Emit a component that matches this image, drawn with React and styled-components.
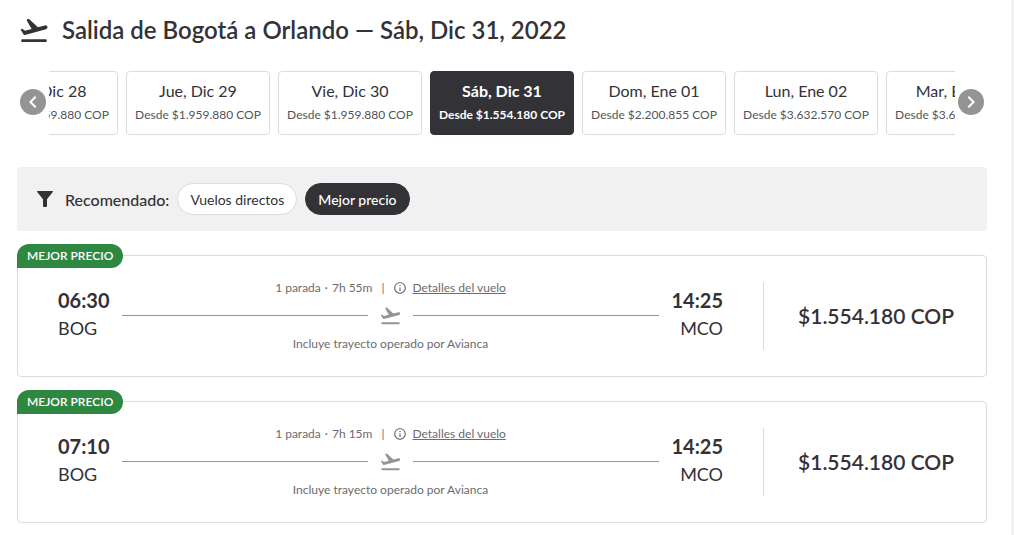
import React from "react";
import styled, { createGlobalStyle, css } from "styled-components";
import {
  MdChevronLeft,
  MdChevronRight,
  MdInfoOutline,
} from "react-icons/md";

const ink = "#333237";
const soft = "#55545a";
const muted = "#6c6b70";
const line = "#dcdcdc";
const panel = "#f1f1f1";

const GlobalStyle = createGlobalStyle`
  *, *::before, *::after { box-sizing: border-box; }
  body {
    margin: 0;
    background: #fff;
    color: ${ink};
    font-family: Lato, "Liberation Sans", sans-serif;
  }
  button { font-family: inherit; cursor: pointer; }
  h1, p, ul { margin: 0; padding: 0; }
  ul { list-style: none; }
  svg { display: block; flex: none; }
`;

const Page = styled.main`
  min-height: 100vh;
  padding: 14px 24px 12px 17px;
  border-right: 3px solid ${panel};
`;

const Title = styled.h1`
  display: flex;
  align-items: center;
  gap: 12px;
  padding-left: 1px;
  font-size: 24px;
  line-height: 32px;
  font-weight: 600;
`;

const Carousel = styled.nav`
  display: grid;
  grid-template-columns: 32px minmax(0, 1fr) 32px;
  align-items: center;
  justify-items: center;
  margin-top: 25px;
`;

const Arrow = styled.button`
  display: grid;
  place-items: center;
  width: 26px;
  height: 26px;
  margin-bottom: 2px;
  padding: 0;
  border: 0;
  border-radius: 50%;
  background: #949494;
  color: #fff;
`;

const DateTrack = styled.ul`
  display: flex;
  justify-content: center;
  gap: 8px;
  width: 100%;
  overflow: hidden;
`;

const DateItem = styled.li`
  flex: none;
`;

const DateName = styled.span`
  font-size: 16px;
  line-height: 20px;
`;

const DateFare = styled.span`
  color: ${soft};
  font-size: 12px;
  line-height: 20px;
`;

const DateCard = styled.button`
  display: flex;
  flex-direction: column;
  align-items: center;
  gap: 4px;
  width: 144px;
  height: 64px;
  padding: 9px 0 0;
  border: 1px solid ${line};
  border-radius: 4px;
  background: #fff;
  color: ${ink};
  font-weight: 400;
  white-space: nowrap;
  ${(p) =>
    p.$active &&
    css`
      border-color: ${ink};
      background: ${ink};
      color: #fff;
      font-weight: 700;
      ${DateFare} {
        color: inherit;
      }
    `}
`;

const FilterBar = styled.section`
  display: flex;
  align-items: center;
  gap: 8px;
  margin-top: 32px;
  padding: 16px 20px;
  border-radius: 4px;
  background: ${panel};
`;

const FilterLabel = styled.span`
  display: flex;
  align-items: center;
  gap: 12px;
  font-size: 16px;
  font-weight: 500;
`;

const Chip = styled.button`
  height: 32px;
  padding: 0 12px;
  border: 1px solid ${line};
  border-radius: 16px;
  background: #fff;
  color: ${ink};
  font-size: 14px;
  font-weight: 400;
  ${(p) =>
    p.$active &&
    css`
      border-color: ${ink};
      background: ${ink};
      color: #fff;
      font-weight: 500;
    `}
`;

const Flights = styled.ul`
  display: grid;
  gap: 24px;
  margin-top: 24px;
`;

const FlightCard = styled.li`
  position: relative;
  display: flex;
  align-items: center;
  min-height: 122px;
  padding: 24px 32px 24px 40px;
  border: 1px solid ${line};
  border-radius: 4px;
`;

const Badge = styled.span`
  position: absolute;
  top: -12px;
  left: -1px;
  padding: 0 10px;
  border-radius: 12px 12px 12px 0;
  background: #2f8842;
  color: #fff;
  font-size: 12px;
  line-height: 24px;
  font-weight: 600;
`;

const Stop = styled.div`
  padding-bottom: 4px;
  text-align: ${(p) => p.$align || "left"};
`;

const Time = styled.p`
  font-size: 20px;
  line-height: 28px;
  font-weight: 700;
`;

const Airport = styled.p`
  font-size: 18px;
  line-height: 28px;
`;

const Route = styled.div`
  flex: 1;
  margin: 0 12px;
  color: ${muted};
  font-size: 12px;
  line-height: 16px;
  text-align: center;
`;

const RouteInfo = styled.div`
  display: flex;
  align-items: center;
  justify-content: center;
  gap: 9px;
`;

const Summary = styled.span`
  display: flex;
  gap: 4px;
`;

const DetailsLink = styled.a`
  display: flex;
  align-items: center;
  gap: 5px;
  color: inherit;
  text-decoration: none;
`;

const DetailsText = styled.span`
  text-decoration: underline;
`;

const Path = styled.div`
  display: flex;
  align-items: center;
  gap: 11px;
  margin: 8px 0 9px;
  color: #949398;
  &::before,
  &::after {
    content: "";
    flex: 1;
    height: 1px;
    background: currentColor;
  }
`;

const Price = styled.p`
  margin-left: 40px;
  padding-left: 34px;
  border-left: 1px solid ${line};
  font-size: 21px;
  line-height: 68px;
  font-weight: 600;
  white-space: nowrap;
`;

const dates = [
  ["Mié, Dic 28", "$1.959.880"],
  ["Jue, Dic 29", "$1.959.880"],
  ["Vie, Dic 30", "$1.959.880"],
  ["Sáb, Dic 31", "$1.554.180"],
  ["Dom, Ene 01", "$2.200.855"],
  ["Lun, Ene 02", "$3.632.570"],
  ["Mar, Ene 03", "$3.632.570"],
];

const flights = [
  { departs: "06:30", arrives: "14:25", duration: "7h 55m" },
  { departs: "07:10", arrives: "14:25", duration: "7h 15m" },
];

const FunnelIcon = () => (
  <svg width="16" height="16" viewBox="0 0 16 16" fill="currentColor" aria-hidden="true">
    <path d="M.6 0h14.8q.9.1.4 1L10 8.2V15q0 1-1 1H7q-1 0-1-1V8.2L.2 1Q-.3.1.6 0z" />
  </svg>
);

const TakeoffIcon = ({ size }) => (
  <svg width={size} height={size} viewBox="0 0 24 24" fill="currentColor" aria-hidden="true">
    <rect x="2.4" y="19" width="19.2" height="2" rx=".8" />
    <path d="M22.07 9.64c-.21-.8-1.04-1.28-1.84-1.06L14.92 10 8.46 3.98c-.27-.26-.66-.35-1.02-.25-.68.19-1 .97-.65 1.58l3.44 5.96-4.97 1.33-1.57-1.24c-.25-.19-.57-.26-.87-.18l-.33.09c-.32.09-.47.45-.31.74l1.88 3.25c.23.39.69.58 1.12.47L21 11.48c.8-.22 1.28-1.04 1.07-1.84z" />
  </svg>
);

function Flight({ departs, arrives, duration }) {
  return (
    <FlightCard>
      <Badge>MEJOR PRECIO</Badge>
      <Stop>
        <Time>{departs}</Time>
        <Airport>BOG</Airport>
      </Stop>
      <Route>
        <RouteInfo>
          <Summary>
            <span>1 parada</span>
            <span>·</span>
            <span>{duration}</span>
          </Summary>
          <span>|</span>
          <DetailsLink href="#detalles">
            <MdInfoOutline size={14} />
            <DetailsText>Detalles del vuelo</DetailsText>
          </DetailsLink>
        </RouteInfo>
        <Path>
          <TakeoffIcon size={23} />
        </Path>
        <p>Incluye trayecto operado por Avianca</p>
      </Route>
      <Stop $align="right">
        <Time>{arrives}</Time>
        <Airport>MCO</Airport>
      </Stop>
      <Price>$1.554.180 COP</Price>
    </FlightCard>
  );
}

export default function App() {
  return (
    <>
      <GlobalStyle />
      <Page>
        <Title>
          <TakeoffIcon size={32} />
          Salida de Bogotá a Orlando — Sáb, Dic 31, 2022
        </Title>
        <Carousel aria-label="Fechas">
          <Arrow aria-label="Anterior">
            <MdChevronLeft size={24} />
          </Arrow>
          <DateTrack>
            {dates.map(([name, fare], i) => (
              <DateItem key={name}>
                <DateCard $active={i === 3}>
                  <DateName>{name}</DateName>
                  <DateFare>Desde {fare} COP</DateFare>
                </DateCard>
              </DateItem>
            ))}
          </DateTrack>
          <Arrow aria-label="Siguiente">
            <MdChevronRight size={24} />
          </Arrow>
        </Carousel>
        <FilterBar>
          <FilterLabel>
            <FunnelIcon />
            Recomendado:
          </FilterLabel>
          <Chip>Vuelos directos</Chip>
          <Chip $active>Mejor precio</Chip>
        </FilterBar>
        <Flights>
          {flights.map((flight) => (
            <Flight key={flight.departs} {...flight} />
          ))}
        </Flights>
      </Page>
    </>
  );
}
